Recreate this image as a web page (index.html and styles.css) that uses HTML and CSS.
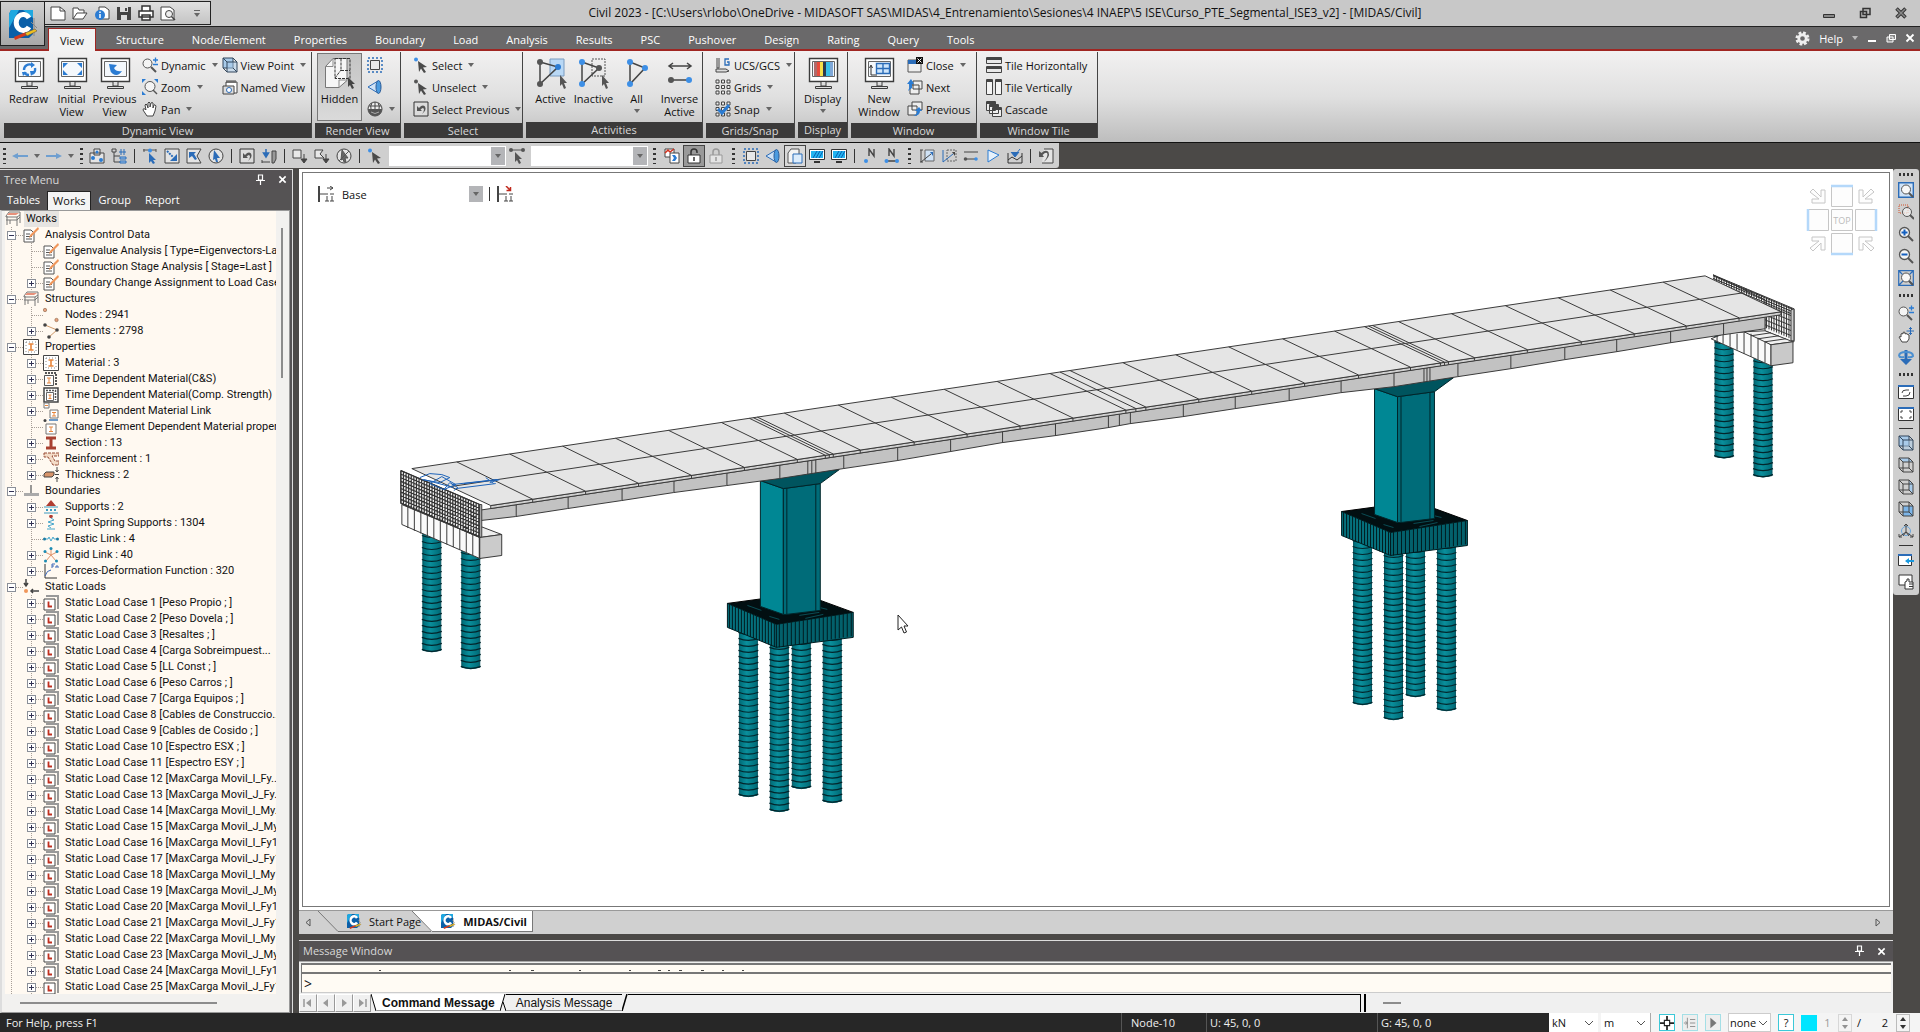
FILE: index.html
```html
<!DOCTYPE html>
<html lang="en">

<head>
    <meta charset="UTF-8">
    <meta name="viewport" content="width=device-width, initial-scale=1.0">
    <title>Civil 2023</title>
    <link rel="stylesheet" href="styles.css">
</head>

<body>
    <!-- icon sprite -->
    <svg class="sprite" aria-hidden="true">
        <symbol id="logo" viewBox="0 0 32 32">
            <path d="M4 2h22v24l-4 4H2V6z" fill="#0a5fa8" />
            <path d="M4 2h8L2 20V6zM16 2h10v8z" fill="#1fa8e0" />
            <path d="M22 10a7 8 0 1 0 0 9" fill="none" stroke="#fff" stroke-width="5" />
            <path d="M27 10v18M24 14l6 6" stroke="#888" fill="none" />
            <path d="M7 29l12-5 1 3-12 5z" fill="#d23a1e" />
            <path d="M18 25l10-4 2 2-10 5z" fill="#f0c020" stroke="#654" stroke-width=".6" />
        </symbol>
        <symbol id="new" viewBox="0 0 16 16"><path d="M1 2h9l5 4v9H1z" fill="#fff" stroke="#444" /><path d="M10 2v4h5" fill="none" stroke="#444" /></symbol>
        <symbol id="open" viewBox="0 0 16 16"><path d="M1 14V3h5l1 2h5v3M1 14l4-6h10l-4 6z" fill="#fff" stroke="#444" /></symbol>
        <symbol id="info" viewBox="0 0 16 16"><path d="M5 2h6l4 3v9H5z" fill="#fff" stroke="#444" /><circle cx="6" cy="10" r="5" fill="#2b7cd3" /><path d="M6 9v4M6 6.500v1.500" stroke="#fff" stroke-width="1.500" /></symbol>
        <symbol id="save" viewBox="0 0 16 16"><path d="M1 2h14v13H1z" fill="#444" /><path d="M4 2h8v5H4zM5 10h6v5H5z" fill="#ddd" /><path d="M9 3h2v3H9z" fill="#444" /></symbol>
        <symbol id="print" viewBox="0 0 16 16"><path d="M4 6V1h8v5M1 6h14v6H1zM4 10h8v5H4z" fill="#fff" stroke="#333" stroke-width="1.500" /></symbol>
        <symbol id="preview" viewBox="0 0 16 16"><path d="M1 2h9l4 3v10H1z" fill="#fff" stroke="#444" /><circle cx="9" cy="9" r="3.500" fill="#eee" stroke="#444" /><path d="M11.500 11.500L15 15" stroke="#444" stroke-width="1.500" /></symbol>
        <symbol id="caret" viewBox="0 0 6 4"><path d="M0 0h6L3 4z" fill="#666" /></symbol>
        <symbol id="chev" viewBox="0 0 10 6"><path d="M1 1l4 4 4-4" fill="none" stroke="#555" /></symbol>

        <!-- monitors -->
        <symbol id="monitor" viewBox="0 0 32 32"><path d="M2.500 1.500h28v23h-28z" fill="#fff" stroke="#3c3c3c" stroke-width="1.400" /><path d="M5.500 4.500h22v15h-22z" fill="#f4f8fc" stroke="#666" /><path d="M14 25v4h5v-4M8.500 29.500h16v2h-16z" fill="#ddd" stroke="#3c3c3c" /></symbol>
        <symbol id="redraw" viewBox="0 0 32 32"><use href="#monitor" /><path d="M11 13a5.500 5.500 0 0 1 8-5M22 11a5.500 5.500 0 0 1-3 6M16 18a5.500 5.500 0 0 1-5-3" fill="none" stroke="#2b7cd3" stroke-width="2.400" /><path d="M18 5l4 3-4 3zM22 14l-4 5-1-5zM9 15h5l-4 4z" fill="#2b7cd3" /></symbol>
        <symbol id="initial" viewBox="0 0 32 32"><use href="#monitor" /><path d="M7 6h5l-5 5zM26 6h-5l5 5zM7 18h5l-5-5zM26 18h-5l5-5z" fill="#2b7cd3" /></symbol>
        <symbol id="previous" viewBox="0 0 32 32"><use href="#monitor" /><path d="M10 7l8 1-3 3q2 4 8 3-4 6-9 3-3-2-3-5z" fill="#2b7cd3" /></symbol>
        <symbol id="display" viewBox="0 0 32 32"><use href="#monitor" /><path d="M7 5h3v14H7z" fill="#b06a6a" /><path d="M10 5h3v14h-3z" fill="#e84b3c" /><path d="M13 5h3v14h-3z" fill="#f5e04a" /><path d="M16 5h3v14h-3z" fill="#2c3a50" /><path d="M19 5h4v14h-4z" fill="#39c0e8" /><path d="M23 5h3v14h-3z" fill="#7fa8d8" /></symbol>
        <symbol id="newwin" viewBox="0 0 32 32"><use href="#monitor" /><path d="M13.500 6.500h13v10h-13zM20 6.500v10M13.500 11.500h13" fill="#cfe6fb" stroke="#2b6cb8" stroke-width="1.400" /><path d="M8 9v9h6M6.500 11L8 8l1.500 3" fill="none" stroke="#333" /></symbol>

        <!-- view -->
        <symbol id="mag" viewBox="0 0 16 16"><circle cx="6.500" cy="6.500" r="5" fill="#f4f4f4" stroke="#555" stroke-width="1.300" /><path d="M10 10l5 5" stroke="#555" stroke-width="2" /></symbol>
        <symbol id="magdyn" viewBox="0 0 16 16"><circle cx="5.500" cy="6.500" r="4.500" fill="#f4f4f4" stroke="#555" /><path d="M9 10l5 5" stroke="#555" stroke-width="2" /><path d="M11 3h5M13.500.5v5M11 7.500h5" stroke="#2b7cd3" stroke-width="1.300" /></symbol>
        <symbol id="magzoom" viewBox="0 0 16 16"><circle cx="8" cy="7.500" r="5" fill="#f4f4f4" stroke="#555" /><path d="M11 11l4 4" stroke="#555" stroke-width="1.500" /><path d="M0 0h4L0 4zM16 0h-4l4 4zM0 16h4l-4-4z" fill="#2b7cd3" /></symbol>
        <symbol id="magin" viewBox="0 0 16 16"><use href="#mag" /><path d="M3.500 6.500h6M6.500 3.500v6" stroke="#1560c0" stroke-width="2" /></symbol>
        <symbol id="magout" viewBox="0 0 16 16"><use href="#mag" /><path d="M3.500 6.500h6" stroke="#1560c0" stroke-width="2" /></symbol>
        <symbol id="magwin" viewBox="0 0 16 16"><path d="M1 1h9v8H1z" fill="none" stroke="#d0532a" stroke-dasharray="1 1" /><circle cx="9" cy="8" r="4.500" fill="#f4f4f4" fill-opacity=".7" stroke="#555" /><path d="M12 11l4 4" stroke="#555" stroke-width="2" /></symbol>
        <symbol id="magfit" viewBox="0 0 16 16"><path d="M.7.7h14.600v14.600H.7z" fill="#cfe2f6" stroke="#2b6cb8" stroke-width="1.400" /><circle cx="8" cy="7.500" r="4.500" fill="#f8f8f8" stroke="#555" /><path d="M11 11l4 4" stroke="#555" stroke-width="2" /></symbol>
        <symbol id="magall" viewBox="0 0 16 16"><path d="M.7.7h14.600v14.600H.7zM1 1l14 14M15 1L1 15" fill="none" stroke="#2b6cb8" stroke-width="1.200" /><circle cx="8" cy="7.500" r="4.500" fill="#f8f8f8" stroke="#555" /><path d="M11 11l4 4" stroke="#555" stroke-width="2" /></symbol>
        <symbol id="hand" viewBox="0 0 16 16"><path d="M5 15l-4-6q0-2 2-1l1 1-1-5q1-2 2 0l1 3V2q1-2 2 0v4l1-4q1-1 2 0v5l1-3q1-1 2 1l-1 5-2 5z" fill="#fff" stroke="#444" /></symbol>
        <symbol id="handmove" viewBox="0 0 16 16"><path d="M4 15l-3-5q0-1 2 0V7q1-1 2 0V5.500q1-1 2 0V7q1-1 2 0l2 1v4l-2 3z" fill="#fff" stroke="#444" /><path d="M12.500 0v8M8.500 4h8M11 1.500h3M11 6.500h3" stroke="#2b6cb8" /></symbol>
        <symbol id="rotate" viewBox="0 0 16 16"><path d="M6.500 1h3v9H14l-6 6-6-6h4.500z" fill="#2b6cb8" /><path d="M1 7q0-4 7-4t7 4q-2 2-5 1M6 8Q2 9 1 7" fill="none" stroke="#4b8fd0" stroke-width="2" /></symbol>
        <symbol id="cube" viewBox="0 0 16 16"><path d="M1 1h10v10H1z" fill="#a9cbea" stroke="#33475c" /><path d="M5 5h10v10H5zM1 1l4 4M11 1l4 4M1 11l4 4M11 11l4 4" fill="#a9cbea" fill-opacity=".5" stroke="#33475c" /></symbol>
        <symbol id="cubetop" viewBox="0 0 16 16"><path d="M1 1h10l4 4H5z" fill="#a9cbea" /><path d="M1 1h10v10H1zM5 5h10v10H5zM1 1l4 4M11 1l4 4M1 11l4 4M11 11l4 4" fill="none" stroke="#444" /></symbol>
        <symbol id="cuberight" viewBox="0 0 16 16"><path d="M11 1l4 4v10l-4-4z" fill="#a9cbea" /><path d="M1 1h10v10H1zM5 5h10v10H5zM1 1l4 4M11 1l4 4M1 11l4 4M11 11l4 4" fill="none" stroke="#444" /></symbol>
        <symbol id="cubefront" viewBox="0 0 16 16"><path d="M5 5h10v10H5z" fill="#7db5e8" /><path d="M1 1h10v10H1zM5 5h10v10H5zM1 1l4 4M11 1l4 4M1 11l4 4M11 11l4 4" fill="none" stroke="#444" /></symbol>
        <symbol id="axes" viewBox="0 0 16 16"><circle cx="8" cy="8" r="4.500" fill="none" stroke="#6aa6dc" /><path d="M8 9V1M6 3l2-2 2 2M8 9l-7 5M1 11v3h3M8 9l7 5M15 11v3h-3M5 13l3-4 3 4" fill="none" stroke="#444" /></symbol>
        <symbol id="camera" viewBox="0 0 16 16"><path d="M4 3h11v11H4z" fill="#fff" stroke="#444" /><path d="M5 1v3M7 1v3M9 1v3M11 1v3M13 1v3" stroke="#444" /><path d="M1 7h11v8H1z" fill="#ddd" stroke="#444" /><circle cx="7" cy="11" r="2.500" fill="#fff" stroke="#2b6cb8" /></symbol>
        <symbol id="hidden" viewBox="0 0 32 32"><path d="M1.500 9.500L9 1.500h14v22l-8 7H1.500z" fill="#f6f6f6" stroke="#777" /><path d="M1.500 9.500H9v-8M15 30v-7h8" fill="none" stroke="#888" /><path d="M11 1.500h15v20H11z" fill="none" stroke="#333" stroke-dasharray="3 1" /><path d="M17 1.500v12h9M11 21l6-8" fill="none" stroke="#333" stroke-dasharray="3 1" /><path d="M24 20l7 7-3 0 2 4-2 1-2-4-2 2z" fill="#444" /></symbol>
        <symbol id="dashbox" viewBox="0 0 16 16"><path d="M3.500 3.500h9v9h-9z" fill="#e8e8e8" stroke="#444" /><path d="M1 1h14v14H1z" fill="none" stroke="#2b6cb8" stroke-width="1.500" stroke-dasharray="2 2" /></symbol>
        <symbol id="cone" viewBox="0 0 16 16"><path d="M1 8l10-6v12z" fill="#cfe2f6" stroke="#2b6cb8" /><ellipse cx="11.500" cy="8" rx="2.500" ry="6.500" fill="#4b9be0" stroke="#2b5c98" /></symbol>
        <symbol id="globe" viewBox="0 0 16 16"><circle cx="8" cy="8" r="7" fill="#eee" stroke="#444" /><path d="M1 8h14a7 7 0 0 1-14 0z" fill="#555" /><path d="M8 1v7M2 5h12M5 2q-2 3-1 6M11 2q2 3 1 6" fill="none" stroke="#444" /><path d="M4 11q4 3 8 0" stroke="#aaa" fill="none" /></symbol>
        <symbol id="arrow" viewBox="0 0 16 16"><path d="M5 4l9 6-4 .5 3 4.500-2 1-3-4.500L6 15z" fill="#4a4a4a" /></symbol>
        <symbol id="select" viewBox="0 0 16 16"><circle cx="3" cy="2.500" r="2" fill="#3d8fe6" /><use href="#arrow" /></symbol>
        <symbol id="unselect" viewBox="0 0 16 16"><circle cx="3" cy="2.500" r="2" fill="#555" /><use href="#arrow" /></symbol>
        <symbol id="selprev" viewBox="0 0 16 16"><path d="M1 1h14v14H1z" fill="#dcdcdc" stroke="#333" /><path d="M4 5v5h5L7.500 8.500q3-3 3.500 0 0 2-2 4.500 5-4 3-7.500-2.500-2.500-6 1.500z" fill="#555" /></symbol>
        <symbol id="active" viewBox="0 0 32 32"><path d="M15 2h14v17H15z" fill="#b9d8f5" stroke="#7a9cc0" /><path d="M5 5l18 5L5 27z" fill="none" stroke="#444" stroke-width="1.500" /><circle cx="5" cy="5" r="3" fill="#555" /><circle cx="5" cy="27" r="3" fill="#555" /><circle cx="23" cy="10" r="3" fill="#2b7cd3" /><path d="M25 18l7 8-3 0 2 5-2 1-2-5-2 2z" fill="#555" /></symbol>
        <symbol id="inactive" viewBox="0 0 32 32"><path d="M14 2h13v17H14z" fill="none" stroke="#555" stroke-dasharray="2 1" /><path d="M4 5l17 6L4 27z" fill="none" stroke="#444" stroke-width="1.500" /><circle cx="4" cy="5" r="3" fill="#3d8fe6" /><circle cx="4" cy="27" r="3" fill="#3d8fe6" /><circle cx="21" cy="11" r="3" fill="#555" /><path d="M24 18l7 8-3 0 2 5-2 1-2-5-2 2z" fill="#555" /></symbol>
        <symbol id="allact" viewBox="0 0 32 32"><path d="M9 5l15 6L9 27z" fill="none" stroke="#444" stroke-width="1.500" /><circle cx="9" cy="5" r="3" fill="#3d8fe6" /><circle cx="9" cy="27" r="3" fill="#3d8fe6" /><circle cx="24" cy="11" r="3" fill="#3d8fe6" /></symbol>
        <symbol id="inverse" viewBox="0 0 32 32"><path d="M5 9h22M9 6L5 9l4 3M23 6l4 3-4 3M8 23h17" fill="none" stroke="#444" stroke-width="1.500" /><circle cx="7" cy="23" r="3" fill="#555" /><circle cx="25" cy="23" r="3" fill="#3d8fe6" /></symbol>
        <symbol id="ucs" viewBox="0 0 16 16"><path d="M2 1v10M4 1v10M2 11h2M1 12h10l3 2-3 1H1z" fill="#ddd" stroke="#444" /><path d="M14 2h-4v6h4V5h-2" fill="none" stroke="#2b6cb8" stroke-width="1.300" /></symbol>
        <symbol id="grids" viewBox="0 0 16 16"><path d="M1 1h3v3H1zM6.500 1h3v3h-3zM12 1h3v3h-3zM1 6.500h3v3H1zM6.500 6.500h3v3h-3zM12 6.500h3v3h-3zM1 12h3v3H1zM6.500 12h3v3h-3zM12 12h3v3h-3z" fill="#eee" stroke="#444" /></symbol>
        <symbol id="snap" viewBox="0 0 16 16"><use href="#grids" /><path d="M3 8l4 4 7-8" fill="none" stroke="#2b7cd3" stroke-width="3" /></symbol>
        <symbol id="winclose" viewBox="0 0 16 16"><path d="M1 3h13v12H1z" fill="#eee" stroke="#555" /><path d="M1 3h9v4H1z" fill="#2b6cb8" /><path d="M9 0h7v7H9z" fill="#111" /><path d="M10.500 1.500l4 4M14.500 1.500l-4 4" stroke="#fff" /></symbol>
        <symbol id="winnext" viewBox="0 0 16 16"><path d="M6 2h9v8H6zM3 6h9v9H3z" fill="#eee" stroke="#444" /><path d="M0 5l4-5 3 5H5v4q-3 2-4 3 2-3 1-7z" fill="#2b7cd3" /></symbol>
        <symbol id="winprev" viewBox="0 0 16 16"><path d="M5 1h10v8H5zM1 5h9v9H1z" fill="#eee" stroke="#444" /><path d="M6 15q4-1 4-5H8l4-4 3 4h-2q0 5-7 5z" fill="#2b7cd3" /></symbol>
        <symbol id="tileh" viewBox="0 0 16 16"><path d="M.5.5h15v6H.5zM.5 9.500h15v6H.5z" fill="#e8e8e8" stroke="#444" /><path d="M1 1h14v2H1zM1 10h14v2H1z" fill="#444" /></symbol>
        <symbol id="tilev" viewBox="0 0 16 16"><path d="M.5.5h6v15h-6zM9.500.5h6v15h-6z" fill="#f4f4f4" stroke="#444" /><path d="M1 1h5v2H1zM10 1h5v2h-5z" fill="#444" /></symbol>
        <symbol id="cascade" viewBox="0 0 16 16"><path d="M.5.5h9v9h-9zM3.500 3.500h9v9h-9zM6.500 6.500h9v9h-9z" fill="#eee" stroke="#444" /><path d="M1 1h8v2H1zM4 4h8v2H4zM7 7h8v2H7z" fill="#444" /></symbol>

        <!-- toolbar -->
        <symbol id="back" viewBox="0 0 16 16"><path d="M16 7H6V5L0 8l6 3V9h10z" fill="#6f9fd0" /></symbol>
        <symbol id="fwd" viewBox="0 0 16 16"><path d="M0 7h10V5l6 3-6 3V9H0z" fill="#6f9fd0" /></symbol>
        <symbol id="boxes" viewBox="0 0 16 16"><path d="M1 5h14v10H1zM5 1h6v6H5z" fill="#e4e4e4" stroke="#444" /><circle cx="8" cy="4" r="1.500" fill="#2b7cd3" /><circle cx="4" cy="10" r="2" fill="#2b7cd3" /><circle cx="12" cy="12" r="2" fill="#2b7cd3" /></symbol>
        <symbol id="treeic" viewBox="0 0 16 16"><path d="M1 1h4v3H1zM3 4v10h6M3 8h6" fill="none" stroke="#444" /><path d="M10 1v6M13 1v6M8 4h7M9 9h6v2H9zM9 13h6v2H9z" stroke="#2b6cb8" fill="#9cc4ec" /></symbol>
        <symbol id="ptsel" viewBox="0 0 16 16"><path d="M1 2h13M2 4v-3M14 4v-3" stroke="#555" /><circle cx="8" cy="2.500" r="2" fill="#3d8fe6" /><path d="M7 5l7 7-3 0 2 3-2 1-2-3-2 2z" fill="#2b6cb8" /></symbol>
        <symbol id="winsel" viewBox="0 0 16 16"><path d="M1 1h14v14H1z" fill="#e4e4e4" stroke="#444" /><path d="M3 3l6 6" stroke="#2b6cb8" stroke-width="2" stroke-dasharray="2 1" /><path d="M13 6v7H6z" fill="#2b6cb8" /></symbol>
        <symbol id="polysel" viewBox="0 0 16 16"><path d="M1 1h14l-4 7 4 7H1z" fill="#e4e4e4" stroke="#444" /><path d="M3 4h7l-2 2 3 5-2 1-3-4-3 2z" fill="#2b6cb8" /></symbol>
        <symbol id="circsel" viewBox="0 0 16 16"><circle cx="8" cy="8" r="7" fill="#e4e4e4" stroke="#444" /><path d="M6 2l6 8H9l1 4-2 0-1-3-2 1z" fill="#2b6cb8" /></symbol>
        <symbol id="planesel" viewBox="0 0 16 16"><path d="M11 3h4v8l-2 4h-2z" fill="#999" stroke="#444" /><path d="M5 1v5M2.500 5h5L5 9z" fill="#2b6cb8" stroke="#2b6cb8" stroke-width="1.500" /><path d="M1 14h8M1 12v3" stroke="#444" /></symbol>
        <symbol id="sqdown" viewBox="0 0 16 16"><path d="M1 2h8v8H1z" fill="#e8e8e8" stroke="#444" /><path d="M12 6v7M9 11l3 4 3-4z" fill="#444" stroke="#444" /></symbol>
        <symbol id="polydown" viewBox="0 0 16 16"><path d="M1 2h8L6 6l4 4H1z" fill="#e8e8e8" stroke="#444" /><path d="M12 6v7M9 11l3 4 3-4z" fill="#444" stroke="#444" /></symbol>
        <symbol id="circno" viewBox="0 0 16 16"><circle cx="8" cy="8" r="7" fill="#e4e4e4" stroke="#444" /><path d="M6 2l6 8H9l1 4-2 0-1-3-2 1zM3 13L13 3" fill="#666" stroke="#555" /></symbol>
        <symbol id="linesel" viewBox="0 0 16 16"><path d="M1 2h14" stroke="#555" /><circle cx="2" cy="2" r="2" fill="#555" /><circle cx="14" cy="2" r="2" fill="#555" /><path d="M6 4l7 7-3 0 2 4-2 1-2-4-2 2z" fill="#555" /></symbol>
        <symbol id="graphs" viewBox="0 0 16 16"><path d="M1 1h9v8H1z" fill="#fff" stroke="#444" /><path d="M1 5l3-3 2 2 4-3" stroke="#d2321e" fill="none" stroke-width="1.500" /><path d="M6 5h9v10H6z" fill="#fff" stroke="#444" /><path d="M8 7h3l2 3-2 3H8l2-3z" fill="#2b7cd3" /></symbol>
        <symbol id="lock" viewBox="0 0 16 16"><path d="M2 7h12v8H2z" fill="#fff" stroke="#333" /><path d="M5 7V4q0-3 3-3t3 3v1M8 9v4" fill="none" stroke="#333" stroke-width="1.500" /></symbol>
        <symbol id="lockoff" viewBox="0 0 16 16"><path d="M2 7h12v8H2z" fill="#e4e4e4" stroke="#999" /><path d="M5 7V4q0-3 3-3t3 3v3M8 9v4" fill="none" stroke="#999" stroke-width="1.500" /></symbol>
        <symbol id="hidesm" viewBox="0 0 16 16"><path d="M1 5l3-4h8v10l-3 4H1z" fill="#f4f4f4" stroke="#555" /><path d="M6 6h9v9H6z" fill="#dcecfb" stroke="#2b6cb8" /></symbol>
        <symbol id="scr" viewBox="0 0 16 16"><path d="M.5 1.500h15v10H.5z" fill="#fff" stroke="#333" /><path d="M2 3h12v7H2z" fill="#22b4f0" /><path d="M4 10l4-7M7 10l4-7M10 10l4-7" stroke="#0a5fb0" /><path d="M5 14h6" stroke="#333" stroke-width="2" /></symbol>
        <symbol id="nodeno" viewBox="0 0 16 16"><path d="M7 8V1l5 7V1" fill="none" stroke="#444" stroke-width="1.400" /><circle cx="4" cy="13" r="2" fill="#3d8fe6" /></symbol>
        <symbol id="elemno" viewBox="0 0 16 16"><path d="M5 8V1l5 7V1M2 13h12" fill="none" stroke="#444" stroke-width="1.400" /><circle cx="2.500" cy="13" r="2" fill="#3d8fe6" /><circle cx="13" cy="13" r="2" fill="#3d8fe6" /></symbol>
        <symbol id="act1" viewBox="0 0 16 16"><path d="M6 2h9v11H6z" fill="#cfe2f6" stroke="#666" /><path d="M2 2v12l10-8M1 2h3M1 14h3" fill="none" stroke="#444" /><path d="M11 4h3v4z" fill="#2b6cb8" /></symbol>
        <symbol id="act2" viewBox="0 0 16 16"><path d="M6 2h9v11H6z" fill="none" stroke="#666" stroke-dasharray="2 1" /><path d="M2 2v12l10-8" fill="none" stroke="#2b6cb8" /><path d="M11 4h3v4z" fill="#444" /></symbol>
        <symbol id="act3" viewBox="0 0 16 16"><path d="M1 4h14M3 11h11" stroke="#444" /><circle cx="2.500" cy="11" r="1.800" fill="#555" /><circle cx="13" cy="11" r="1.800" fill="#3d8fe6" /></symbol>
        <symbol id="act4" viewBox="0 0 16 16"><path d="M3 2l11 5-11 7z" fill="#e6f1fb" stroke="#2b7cd3" /></symbol>
        <symbol id="act5" viewBox="0 0 16 16"><path d="M1 5v10h14V5M1 12l4-3 5 3 5-4" fill="none" stroke="#333" /><path d="M4 4l4 5 4-5M13 1L9 6" fill="#2b6cb8" stroke="#2b6cb8" /></symbol>
        <symbol id="act6" viewBox="0 0 16 16"><path d="M6 1h9v14H4" fill="#e4e4e4" stroke="#444" /><path d="M1 3v6h5L4.500 7q4-4 5-1 0 4-4 8 7-5 5-10-3-3-7 1z" fill="#555" /></symbol>
        <symbol id="stage" viewBox="0 0 16 16"><path d="M1 0v16" stroke="#444" stroke-width="2" /><path d="M1 8h9M12 8h4M9 2h6M12 0l3 2-3 2M9 15v-5M14 15v-5M7 15h4M12 15h4" fill="none" stroke="#444" /></symbol>
        <symbol id="stagered" viewBox="0 0 16 16"><path d="M1 0v16" stroke="#444" stroke-width="2" /><path d="M1 8h9M12 8h4M9 15v-5M14 15v-5M7 15h4M12 15h4" fill="none" stroke="#444" /><path d="M9 0l4 4M13.500 1v3.500h-4" stroke="#c0281c" fill="none" stroke-width="1.500" /></symbol>
        <symbol id="winrot" viewBox="0 0 16 16"><path d="M.5 1.500h15v13H.5z" fill="#fff" stroke="#333" /><path d="M0 1h16v2H0z" fill="#2b6cb8" /><path d="M4 9q0-3 4-3h3M12 8q0 4-4 4H5" fill="none" stroke="#444" /></symbol>
        <symbol id="winfit" viewBox="0 0 16 16"><path d="M.5 1.500h15v13H.5z" fill="#fff" stroke="#333" /><path d="M0 1h16v2H0z" fill="#2b6cb8" /><path d="M3 7V5h2M13 7V5h-2M3 10v2h2M13 10v2h-2" fill="none" stroke="#444" /></symbol>
        <symbol id="winarrow" viewBox="0 0 16 16"><path d="M.5 2.500h13v11H.5z" fill="#fff" stroke="#333" /><path d="M0 2h14v2H0z" fill="#2b6cb8" /><path d="M7 9l4-3v2h5v2h-5v2z" fill="#1a9ae0" /></symbol>
        <symbol id="winhand" viewBox="0 0 16 16"><path d="M1 1h13v10H1z" fill="#fff" stroke="#333" /><path d="M7 8l2-1V5h2v3h4v7H7zM11 10h4M11 12.500h4" fill="#fff" stroke="#333" /></symbol>
        <symbol id="gear" viewBox="0 0 16 16"><circle cx="8" cy="8" r="5.500" fill="none" stroke="#eee" stroke-width="4" stroke-dasharray="2.600 1.700" /><circle cx="8" cy="8" r="4" fill="none" stroke="#eee" stroke-width="3" /></symbol>
        <symbol id="pin" viewBox="0 0 10 12"><path d="M2.500 1h4v5h-4zM0 6.500h9M4.500 7v4" fill="none" stroke="#fff" stroke-width="1.200" /></symbol>
        <symbol id="x" viewBox="0 0 10 10"><path d="M1.500 1.500l7 7M8.500 1.500l-7 7" stroke="#fff" stroke-width="1.800" /></symbol>

        <!-- tree -->
        <symbol id="t-root" viewBox="0 0 16 16"><path d="M1 5l3-4h11v3l-3 2H1zM1 9h11l3-3M2 5v9M12 6v9M5 9v4M15 4v8" fill="none" stroke="#777" /><path d="M2 4l2-2h10l-3 2z" fill="#e8907a" /></symbol>
        <symbol id="t-edit" viewBox="0 0 16 16"><path d="M1 3h7l3 3v9H1z" fill="#fff" stroke="#555" /><path d="M3 7h4M3 9.500h6M3 12h6" stroke="#555" /><path d="M15 0l1 2-8 8-2 1 1-3z" fill="#f0965a" /></symbol>
        <symbol id="t-nodes" viewBox="0 0 16 16"><circle cx="2" cy="3" r="1.700" fill="#e8a080" stroke="#864" stroke-width=".6" /><circle cx="13.500" cy="13" r="1.700" fill="#e8a080" stroke="#864" stroke-width=".6" /></symbol>
        <symbol id="t-elems" viewBox="0 0 16 16"><path d="M2 2l12 5-8 7" fill="none" stroke="#d09a6a" /><circle cx="2" cy="2" r="1.800" fill="#444" /><circle cx="14" cy="7" r="1.800" fill="#444" /><circle cx="6" cy="14" r="1.800" fill="#444" /></symbol>
        <symbol id="t-mat" viewBox="0 0 16 16"><path d="M.5.5h15v15H.5z" fill="#fff" stroke="#444" /><path d="M3 3h10v10H3z" fill="none" stroke="#888" stroke-dasharray="1 2" /><path d="M5.500 5h5M5.500 11h5M8 5v6" stroke="#e8863c" stroke-width="1.600" /></symbol>
        <symbol id="t-time" viewBox="0 0 16 16"><path d="M2 2h11v12" fill="none" stroke="#555" stroke-width="2" stroke-dasharray="2 1" /><path d="M1.500 4.500h9v10h-9z" fill="#fff" stroke="#555" /><path d="M4 7h4M4 12h4M6 7v5" stroke="#e8863c" /></symbol>
        <symbol id="t-comp" viewBox="0 0 16 16"><path d="M1 1h14v14H1z" fill="#fff" stroke="#444" stroke-width="1.500" /><path d="M3 3.500h9.500V13" fill="none" stroke="#555" stroke-width="1.500" stroke-dasharray="2 1" /><path d="M3.500 5.500h7v8h-7z" fill="#fff" stroke="#666" /><path d="M5.500 8h3M5.500 11.500h3M7 8v3" stroke="#e8863c" /></symbol>
        <symbol id="t-link" viewBox="0 0 16 16"><path d="M1 0h5v5H1zM7 7h8v8H7z" fill="#fff" stroke="#777" /><path d="M9 9.500h4M9 13h4M11 9v4M2 2.500h3" stroke="#e8863c" /></symbol>
        <symbol id="t-chg" viewBox="0 0 16 16"><path d="M3 5h10v10H3z" fill="#fff" stroke="#777" /><path d="M6 8h4M6 12.500h4M8 8v4" stroke="#e8863c" /><path d="M6 1h9" stroke="#3c78b8" stroke-width="1.500" /><circle cx="2" cy="1.500" r="1.500" fill="#444" /></symbol>
        <symbol id="t-sec" viewBox="0 0 16 16"><path d="M3 3h10M3 13h10M8 3v10" stroke="#a84030" stroke-width="3" /></symbol>
        <symbol id="t-rein" viewBox="0 0 16 16"><path d="M1 2h15v3H9l3 5h4v4h-6L5 6H1z" fill="#f4dcc8" stroke="#964a34" stroke-dasharray="3 1" /></symbol>
        <symbol id="t-thick" viewBox="0 0 16 16"><path d="M1 7l2-2h8v3l-2 2H1z" fill="#d8946a" stroke="#444" /><path d="M14 0v5M12.500 3L14 5l1.500-2M14 15v-5M12.500 12l1.500-2 1.500 2M12 7.500h4" fill="none" stroke="#444" /></symbol>
        <symbol id="t-bound" viewBox="0 0 16 16"><path d="M8 2v8" stroke="#777" stroke-width="1.500" /><path d="M1 10h15v3H1z" fill="#aaa" /></symbol>
        <symbol id="t-supp" viewBox="0 0 16 16"><path d="M8 1l5 6H3z" fill="#b03c30" /><path d="M1 8h14M1 14h14" stroke="#3d9ac0" /><path d="M3 11h2M7 11h2M11 11h2" stroke="#3d9ac0" stroke-width="2" /></symbol>
        <symbol id="t-spring" viewBox="0 0 16 16"><circle cx="8" cy="1.500" r="1.800" fill="#b03c30" /><path d="M8 3l3 2-6 2 6 2-6 2 3 2M4 14h8" fill="none" stroke="#4aa8cc" /></symbol>
        <symbol id="t-elastic" viewBox="0 0 16 16"><path d="M1 8h4l1-2 2 4 2-4 1 2h4" fill="none" stroke="#4aa8cc" /><circle cx="1.500" cy="8" r="1.500" fill="#1c7ca4" /><circle cx="14.500" cy="8" r="1.500" fill="#1c7ca4" /></symbol>
        <symbol id="t-rigid" viewBox="0 0 16 16"><path d="M8 8V2M8 8L2 5M8 8l6-3M8 8l-5 6M8 8l5 6" stroke="#e0946a" /><g fill="#1c8cb4"><circle cx="8" cy="1.500" r="1.500" /><circle cx="2" cy="4.500" r="1.500" /><circle cx="14" cy="4.500" r="1.500" /><circle cx="2.500" cy="14" r="1.500" /><circle cx="13.500" cy="14" r="1.500" /></g></symbol>
        <symbol id="t-force" viewBox="0 0 16 16"><path d="M2 1v14h12" fill="none" stroke="#333" /><path d="M2 13q2-6 6-6M9 5V1h3M9 3h2M13 5V3h2v2" fill="none" stroke="#3c68b8" /></symbol>
        <symbol id="t-loads" viewBox="0 0 16 16"><path d="M3 0v6M1 4l2 3 2-3M16 12H8M10 10l-2 2 2 2" fill="none" stroke="#444" stroke-width="1.500" /><circle cx="3" cy="12" r="2" fill="#f0965a" /></symbol>
        <symbol id="t-case" viewBox="0 0 16 16"><path d="M3 1h12v13" fill="none" stroke="#999" stroke-width="2" /><path d="M1 4h11v11H1z" fill="#fff" stroke="#444" /><path d="M5.500 6.500v5h3.500" fill="none" stroke="#c03020" stroke-width="1.800" /></symbol>
    </svg>

    <header class="titlebar">
        <button class="app-button" aria-label="Application menu"><svg><use href="#logo" /></svg></button>
        <div class="quick">
            <button aria-label="New"><svg class="ic"><use href="#new" /></svg></button>
            <button aria-label="Open"><svg class="ic"><use href="#open" /></svg></button>
            <button aria-label="Info"><svg class="ic"><use href="#info" /></svg></button>
            <button aria-label="Save"><svg class="ic"><use href="#save" /></svg></button>
            <button aria-label="Print"><svg class="ic"><use href="#print" /></svg></button>
            <button aria-label="Preview"><svg class="ic"><use href="#preview" /></svg></button>
            <button class="quick-more" aria-label="Customize"><svg class="caret"><use href="#caret" /></svg></button>
        </div>
        <h1>Civil 2023 - [C:\Users\rlobo\OneDrive - MIDASOFT SAS\MIDAS\4_Entrenamiento\Sesiones\4 INAEP\5 ISE\Curso_PTE_Segmental_ISE3_v2] - [MIDAS/Civil]</h1>
        <div class="window-buttons">
            <button aria-label="Minimize"><svg viewBox="0 0 12 12"><path d="M.5 7.500h11v3H.5z" fill="#888" stroke="#333" /></svg></button>
            <button aria-label="Restore"><svg viewBox="0 0 12 12"><path d="M4 1.500h7v6H4zM1.500 4.500h6v6h-6z" fill="#bbb" stroke="#333" stroke-width="1.500" /></svg></button>
            <button aria-label="Close"><svg viewBox="0 0 12 12"><path d="M1.500 1.500l9 9M10.500 1.500l-9 9" stroke="#333" stroke-width="3.500" /><path d="M2 2l8 8M10 2l-8 8" stroke="#888" stroke-width="1.500" /></svg></button>
        </div>
    </header>

    <nav class="tabs">
        <a class="tab active" href="#">View</a>
        <a class="tab" href="#">Structure</a>
        <a class="tab" href="#">Node/Element</a>
        <a class="tab" href="#">Properties</a>
        <a class="tab" href="#">Boundary</a>
        <a class="tab" href="#">Load</a>
        <a class="tab" href="#">Analysis</a>
        <a class="tab" href="#">Results</a>
        <a class="tab" href="#">PSC</a>
        <a class="tab" href="#">Pushover</a>
        <a class="tab" href="#">Design</a>
        <a class="tab" href="#">Rating</a>
        <a class="tab" href="#">Query</a>
        <a class="tab" href="#">Tools</a>
        <div class="help">
            <svg class="ic"><use href="#gear" /></svg>
            <a href="#">Help</a>
            <svg class="help-caret" viewBox="0 0 6 4"><path d="M0 0h6L3 4z" fill="#bbb" /></svg>
            <button aria-label="Minimize document"><svg viewBox="0 0 10 10"><path d="M1 8h8" stroke="#fff" stroke-width="2" /></svg></button>
            <button aria-label="Restore document"><svg viewBox="0 0 10 10"><path d="M3.500 1.500h6v5h-6zM1 4h6v5H1z" fill="#888" stroke="#fff" /></svg></button>
            <button aria-label="Close document"><svg><use href="#x" /></svg></button>
        </div>
    </nav>

    <section class="ribbon">
        <div class="group g-dynamic">
            <div class="group-body">
                <button class="big"><svg><use href="#redraw" /></svg>Redraw</button>
                <button class="big"><svg><use href="#initial" /></svg>Initial<br>View</button>
                <button class="big"><svg><use href="#previous" /></svg>Previous<br>View</button>
                <div class="col">
                    <button><svg class="ic"><use href="#magdyn" /></svg>Dynamic<svg class="caret"><use href="#caret" /></svg></button>
                    <button><svg class="ic"><use href="#magzoom" /></svg>Zoom<svg class="caret"><use href="#caret" /></svg></button>
                    <button><svg class="ic"><use href="#hand" /></svg>Pan<svg class="caret"><use href="#caret" /></svg></button>
                </div>
                <div class="col">
                    <button><svg class="ic"><use href="#cube" /></svg>View Point<svg class="caret"><use href="#caret" /></svg></button>
                    <button><svg class="ic"><use href="#camera" /></svg>Named View</button>
                </div>
            </div>
            <h2>Dynamic View</h2>
        </div>
        <div class="group g-render">
            <div class="group-body">
                <button class="big pressed"><svg><use href="#hidden" /></svg>Hidden</button>
                <div class="col">
                    <button aria-label="Shrink"><svg class="ic"><use href="#dashbox" /></svg></button>
                    <button aria-label="Perspective"><svg class="ic"><use href="#cone" /></svg></button>
                    <button aria-label="Render"><svg class="ic"><use href="#globe" /></svg><svg class="caret"><use href="#caret" /></svg></button>
                </div>
            </div>
            <h2>Render View</h2>
        </div>
        <div class="group g-select">
            <div class="group-body">
                <div class="col">
                    <button><svg class="ic"><use href="#select" /></svg>Select<svg class="caret"><use href="#caret" /></svg></button>
                    <button><svg class="ic"><use href="#unselect" /></svg>Unselect<svg class="caret"><use href="#caret" /></svg></button>
                    <button><svg class="ic"><use href="#selprev" /></svg>Select Previous<svg class="caret"><use href="#caret" /></svg></button>
                </div>
            </div>
            <h2>Select</h2>
        </div>
        <div class="group g-activities">
            <div class="group-body">
                <button class="big"><svg><use href="#active" /></svg>Active</button>
                <button class="big"><svg><use href="#inactive" /></svg>Inactive</button>
                <button class="big"><svg><use href="#allact" /></svg>All<svg class="caret"><use href="#caret" /></svg></button>
                <button class="big"><svg><use href="#inverse" /></svg>Inverse<br>Active</button>
            </div>
            <h2>Activities</h2>
        </div>
        <div class="group g-grids">
            <div class="group-body">
                <div class="col">
                    <button><svg class="ic"><use href="#ucs" /></svg>UCS/GCS<svg class="caret"><use href="#caret" /></svg></button>
                    <button><svg class="ic"><use href="#grids" /></svg>Grids<svg class="caret"><use href="#caret" /></svg></button>
                    <button><svg class="ic"><use href="#snap" /></svg>Snap<svg class="caret"><use href="#caret" /></svg></button>
                </div>
            </div>
            <h2>Grids/Snap</h2>
        </div>
        <div class="group g-display">
            <div class="group-body">
                <button class="big"><svg><use href="#display" /></svg>Display<svg class="caret"><use href="#caret" /></svg></button>
            </div>
            <h2>Display</h2>
        </div>
        <div class="group g-window">
            <div class="group-body">
                <button class="big wide"><svg><use href="#newwin" /></svg>New<br>Window</button>
                <div class="col tight">
                    <button><svg class="ic"><use href="#winclose" /></svg>Close<svg class="caret"><use href="#caret" /></svg></button>
                    <button><svg class="ic"><use href="#winnext" /></svg>Next</button>
                    <button><svg class="ic"><use href="#winprev" /></svg>Previous</button>
                </div>
            </div>
            <h2>Window</h2>
        </div>
        <div class="group g-tile">
            <div class="group-body">
                <div class="col tight">
                    <button><svg class="ic"><use href="#tileh" /></svg>Tile Horizontally</button>
                    <button><svg class="ic"><use href="#tilev" /></svg>Tile Vertically</button>
                    <button><svg class="ic"><use href="#cascade" /></svg>Cascade</button>
                </div>
            </div>
            <h2>Window Tile</h2>
        </div>
    </section>

    <div class="toolbar-row">
        <div class="toolbar">
            <i class="grip"></i>
            <button aria-label="Undo"><svg class="ic"><use href="#back" /></svg></button>
            <svg class="caret"><use href="#caret" /></svg>
            <button aria-label="Redo"><svg class="ic"><use href="#fwd" /></svg></button>
            <svg class="caret"><use href="#caret" /></svg>
            <i class="grip"></i>
            <button aria-label="Works tree"><svg class="ic"><use href="#boxes" /></svg></button>
            <button aria-label="Group tree"><svg class="ic"><use href="#treeic" /></svg></button>
            <i class="sep"></i>
            <button aria-label="Select single"><svg class="ic"><use href="#ptsel" /></svg></button>
            <button aria-label="Select window"><svg class="ic"><use href="#winsel" /></svg></button>
            <button aria-label="Select polygon"><svg class="ic"><use href="#polysel" /></svg></button>
            <button aria-label="Select circle"><svg class="ic"><use href="#circsel" /></svg></button>
            <i class="sep"></i>
            <button aria-label="Select previous"><svg class="ic"><use href="#selprev" /></svg></button>
            <button aria-label="Select plane"><svg class="ic"><use href="#planesel" /></svg></button>
            <i class="sep"></i>
            <button aria-label="Unselect window"><svg class="ic"><use href="#sqdown" /></svg></button>
            <button aria-label="Unselect polygon"><svg class="ic"><use href="#polydown" /></svg></button>
            <button aria-label="Unselect circle"><svg class="ic"><use href="#circno" /></svg></button>
            <i class="sep"></i>
            <button aria-label="Select nodes"><svg class="ic"><use href="#select" /></svg></button>
            <span class="combo"><select aria-label="Node list"><option></option></select><span><svg class="caret"><use href="#caret" /></svg></span></span>
            <button aria-label="Select elements"><svg class="ic"><use href="#linesel" /></svg></button>
            <span class="combo"><select aria-label="Element list"><option></option></select><span><svg class="caret"><use href="#caret" /></svg></span></span>
            <i class="grip wide-grip"></i>
            <button aria-label="Results"><svg class="ic"><use href="#graphs" /></svg></button>
            <button class="on" aria-label="Unlock"><svg class="ic"><use href="#lock" /></svg></button>
            <button aria-label="Lock"><svg class="ic"><use href="#lockoff" /></svg></button>
            <i class="grip wide-grip"></i>
            <button aria-label="Shrink"><svg class="ic"><use href="#dashbox" /></svg></button>
            <button aria-label="Perspective"><svg class="ic"><use href="#cone" /></svg></button>
            <button class="on light" aria-label="Hidden"><svg class="ic"><use href="#hidesm" /></svg></button>
            <button aria-label="Display"><svg class="ic"><use href="#scr" /></svg></button>
            <button aria-label="Display option"><svg class="ic"><use href="#scr" /></svg></button>
            <i class="sep"></i>
            <button aria-label="Node number"><svg class="ic"><use href="#nodeno" /></svg></button>
            <button aria-label="Element number"><svg class="ic"><use href="#elemno" /></svg></button>
            <i class="grip wide-grip"></i>
            <button aria-label="Active"><svg class="ic"><use href="#act1" /></svg></button>
            <button aria-label="Inactive"><svg class="ic"><use href="#act2" /></svg></button>
            <button aria-label="Inverse"><svg class="ic"><use href="#act3" /></svg></button>
            <button aria-label="All"><svg class="ic"><use href="#act4" /></svg></button>
            <button aria-label="Active identity"><svg class="ic"><use href="#act5" /></svg></button>
            <i class="sep"></i>
            <button aria-label="Active previous"><svg class="ic"><use href="#act6" /></svg></button>
        </div>
    </div>

    <main>
        <aside class="tree-panel">
            <div class="panel-title"><span>Tree Menu</span><svg class="pin"><use href="#pin" /></svg><svg class="x"><use href="#x" /></svg></div>
            <nav class="tree-tabs">
                <a href="#">Tables</a><a class="active" href="#">Works</a><a href="#">Group</a><a href="#">Report</a>
            </nav>
            <div class="tree-box">
                <div class="tree-scroll">
                    <ul class="tree" id="tree"></ul>
                    <div class="vbar"><i></i></div>
                </div>
                <div class="hbar"><i></i></div>
            </div>
        </aside>

        <section class="center">
            <div class="view">
                <svg class="model" id="model" viewBox="302 172 1588 736" preserveAspectRatio="xMinYMin meet" role="img" aria-label="Bridge model"></svg>
                <div class="stage-bar">
                    <svg class="ic"><use href="#stage" /></svg>
                    <select aria-label="Stage"><option>Base</option></select>
                    <span class="stage-arrow"><svg class="caret"><use href="#caret" /></svg></span>
                    <i class="sep"></i>
                    <svg class="ic"><use href="#stagered" /></svg>
                </div>
                <svg class="view-cube" viewBox="0 0 72 72">
                    <g fill="#fdfdfd" stroke="#c6c6c6">
                        <path d="M25.500 1.500h21v21h-21zM25.500 25.500h21v21h-21zM25.500 49.500h21v21h-21zM1.500 25.500h21v21h-21zM49.500 25.500h21v21h-21z" />
                        <path d="M4 8l3-3 8 8V6h4v13H6v-4h7z" />
                        <path d="M68 8l-3-3-8 8V6h-4v13h13v-4h-7zM4 64l3 3 8-8v7h4V53H6v4h7zM68 64l-3 3-8-8v7h-4V53h13v4h-7z" />
                    </g>
                    <path d="M25 2h22M25 70h22M2 25v22M70 25v22" stroke="#b4d8fa" stroke-width="2.500" />
                    <text x="36" y="40">TOP</text>
                </svg>
                <svg class="pointer" viewBox="0 0 12 20"><path d="M1 1v15l3.500-3 2.500 6 2.500-1-2.500-6H11z" fill="#fff" stroke="#222" /></svg>
            </div>
            <nav class="doc-tabs">
                <svg class="nudge" viewBox="0 0 6 9"><path d="M5 1v7L1 4.500z" fill="none" stroke="#555" /></svg>
                <a class="doc-tab" href="#"><svg class="slant" viewBox="0 0 20 21"><path d="M0 0l20 20.500" fill="none" stroke="#777" /></svg><span><svg class="ic"><use href="#logo" /></svg>Start Page</span></a>
                <a class="doc-tab active" href="#"><svg class="slant" viewBox="0 0 20 21"><path d="M0 0h20v21z" fill="#fff" /><path d="M0 0l20 20.500" stroke="#777" /></svg><span><svg class="ic"><use href="#logo" /></svg>MIDAS/Civil</span></a>
                <svg class="nudge right" viewBox="0 0 6 9"><path d="M1 1v7l4-3.500z" fill="none" stroke="#555" /></svg>
            </nav>
            <section class="message">
                <div class="panel-title"><span>Message Window</span><svg class="pin"><use href="#pin" /></svg><svg class="x"><use href="#x" /></svg></div>
                <div class="log"><svg viewBox="0 0 460 6"><path d="M77 5.500h2M207 5.500h2M229 5.500h3M277 5.500h2M327 5.500h2M356 5.500h3M366 5.500h2M377 5.500h3M399 5.500h3M420 5.500h2M440 5.500h2" stroke="#444" /></svg></div>
                <label class="command"><span>&gt;</span><input type="text" aria-label="Command"></label>
                <div class="msg-tabs">
                    <button class="step" aria-label="First"><svg viewBox="0 0 10 10"><path d="M1 1v8" stroke="#999" stroke-width="1.500" /><path d="M8 1v8L3 5z" fill="#999" /></svg></button>
                    <button class="step" aria-label="Back"><svg viewBox="0 0 10 10"><path d="M7 1v8L2 5z" fill="#999" /></svg></button>
                    <button class="step" aria-label="Next"><svg viewBox="0 0 10 10"><path d="M3 1v8l5-4z" fill="#999" /></svg></button>
                    <button class="step" aria-label="Last"><svg viewBox="0 0 10 10"><path d="M9 1v8" stroke="#999" stroke-width="1.500" /><path d="M2 1v8l5-4z" fill="#999" /></svg></button>
                    <a class="msg-tab active" href="#"><svg viewBox="0 0 6 17"><path d="M0 0l5 17h1V0z" fill="#fff" /><path d="M0 0l5 17" stroke="#000" fill="none" /></svg><span>Command Message</span><svg viewBox="0 0 6 17"><path d="M0 17l5-17H0z" fill="#fff" /><path d="M0 17L5 0M3 8l3 9" stroke="#000" fill="none" /></svg></a>
                    <a class="msg-tab" href="#"><span>Analysis Message</span><svg viewBox="0 0 6 17"><path d="M0 17L5 0" stroke="#000" fill="none" stroke-width="1.500" /></svg></a>
                    <div class="msg-fill"></div>
                    <div class="msg-scroll"><i></i></div>
                </div>
            </section>
        </section>

        <div class="side">
            <div class="side-bar">
                <i class="hgrip"></i>
                <button aria-label="Zoom fit"><svg class="ic"><use href="#magfit" /></svg></button>
                <button aria-label="Zoom window"><svg class="ic"><use href="#magwin" /></svg></button>
                <button aria-label="Zoom in"><svg class="ic"><use href="#magin" /></svg></button>
                <button aria-label="Zoom out"><svg class="ic"><use href="#magout" /></svg></button>
                <button aria-label="Zoom all"><svg class="ic"><use href="#magall" /></svg></button>
                <i class="hgrip"></i>
                <button aria-label="Dynamic zoom"><svg class="ic"><use href="#magdyn" /></svg></button>
                <button aria-label="Pan"><svg class="ic"><use href="#handmove" /></svg></button>
                <button aria-label="Rotate"><svg class="ic"><use href="#rotate" /></svg></button>
                <i class="hgrip"></i>
                <button aria-label="Redraw"><svg class="ic"><use href="#winrot" /></svg></button>
                <button aria-label="Initial"><svg class="ic"><use href="#winfit" /></svg></button>
                <i class="hsep"></i>
                <button aria-label="Iso"><svg class="ic"><use href="#cube" /></svg></button>
                <button aria-label="Top"><svg class="ic"><use href="#cubetop" /></svg></button>
                <button aria-label="Right"><svg class="ic"><use href="#cuberight" /></svg></button>
                <button aria-label="Front"><svg class="ic"><use href="#cubefront" /></svg></button>
                <button aria-label="Angle"><svg class="ic"><use href="#axes" /></svg></button>
                <i class="hsep"></i>
                <button aria-label="Previous view"><svg class="ic"><use href="#winarrow" /></svg></button>
                <button aria-label="Named view"><svg class="ic"><use href="#winhand" /></svg></button>
            </div>
        </div>
    </main>

    <footer class="status">
        <span class="status-help">For Help, press F1</span>
        <span class="status-node">Node-10</span>
        <span class="status-u">U: 45, 0, 0</span>
        <span class="status-g">G: 45, 0, 0</span>
        <div class="status-tools">
            <span class="pick force"><select aria-label="Force unit"><option>kN</option></select><svg><use href="#chev" /></svg></span>
            <span class="pick length"><select aria-label="Length unit"><option>m</option></select><svg><use href="#chev" /></svg></span>
            <button aria-label="Snap"><svg viewBox="0 0 16 16"><path d="M5 5h6v6H5z" fill="#fff" stroke="#222" stroke-width="1.300" /><path d="M8 0v5M8 11v5M0 8h5M11 8h5" stroke="#222" stroke-width="2" /></svg></button>
            <button class="dim" aria-label="Align"><svg viewBox="0 0 16 16"><path d="M5 2v12M8 4h6M8 8h6M8 12h6M1 8h4M3 6l2 2-2 2" fill="none" stroke="#888" /></svg></button>
            <button class="dim" aria-label="Run"><svg viewBox="0 0 16 16"><path d="M5 2v12l7-6z" fill="#777" /></svg></button>
            <span class="pick none"><select aria-label="Filter"><option>none</option></select><svg><use href="#chev" /></svg></span>
            <button class="query" aria-label="Query">?</button>
            <i class="swatch"></i>
            <input class="num" type="text" value="1" aria-label="Page" disabled>
            <span class="spin off"><i></i><i></i></span>
            <span class="slash">/</span>
            <input class="num" type="text" value="2" aria-label="Pages">
            <span class="spin"><i></i><i></i></span>
        </div>
    </footer>

    <script src="script.js"></script>
</body>

</html>
```
FILE: styles.css
```css
* {
    margin: 0;
    padding: 0;
    box-sizing: border-box;
}

body {
    display: flex;
    flex-direction: column;
    height: 100vh;
    overflow: hidden;
    background-color: #4b4947;
    color: #111;
    font-family: "Open Sans", "Noto Sans", sans-serif;
    font-size: 11px;
}

button,
select,
input {
    border: 0;
    background: none;
    font: inherit;
    color: inherit;
    border-radius: 0;
}

select {
    appearance: none;
}

a {
    color: inherit;
    text-decoration: none;
}

svg {
    display: block;
    flex: none;
}

.sprite {
    position: absolute;
    width: 0;
    height: 0;
}

.ic {
    width: 16px;
    height: 16px;
}

.caret {
    width: 6px;
    height: 4px;
}

/* title bar */
.titlebar {
    position: relative;
    display: flex;
    flex: none;
    height: 27px;
    background-color: #c8c8c8;
    border-bottom: 1px solid #222;
}

.app-button {
    position: absolute;
    left: 0;
    top: 1px;
    z-index: 2;
    width: 45px;
    height: 45px;
    border: 1px solid #222;
    background: linear-gradient(#cfcfcf, #a8a8a8);
}

.app-button svg {
    width: 32px;
    height: 32px;
    margin: 0 auto;
}

.quick {
    display: flex;
    align-items: center;
    width: 167px;
    height: 24px;
    margin: 1px 0 0 44px;
    padding-left: 5px;
    gap: 6px;
    border: 1px solid #222;
    background: linear-gradient(#e0e0e0, #c4c4c4);
}

.quick-more {
    margin-left: 12px;
    padding-top: 2px;
    border-top: 1px solid #666;
}

.titlebar h1 {
    flex: 1;
    padding-right: 24px;
    line-height: 26px;
    font-size: 12px;
    font-weight: 400;
    text-align: center;
    white-space: nowrap;
}

.window-buttons {
    display: flex;
    align-items: center;
    gap: 24px;
    padding-right: 13px;
}

.window-buttons svg {
    width: 12px;
    height: 12px;
}

/* ribbon tabs */
.tabs {
    display: flex;
    flex: none;
    height: 24px;
    padding-left: 48px;
    background-color: #6a696a;
    border-bottom: 2px solid #a02622;
    color: #fff;
}

.tab {
    padding: 0 14px;
    line-height: 26px;
}

.tab.active {
    height: 24px;
    margin: 1px 6px 0 0;
    padding: 0 11px;
    line-height: 24px;
    border: 1px solid #a02622;
    border-bottom: 0;
    background-color: #f2f2f2;
    color: #111;
}

.help {
    display: flex;
    align-items: center;
    gap: 9px;
    margin-left: auto;
    padding-right: 5px;
}

.help svg {
    width: 10px;
    height: 10px;
}

.help .ic {
    width: 15px;
    height: 15px;
}

.help .help-caret {
    width: 6px;
    height: 4px;
}

/* ribbon */
.ribbon {
    display: flex;
    flex: none;
    height: 92px;
    padding-left: 4px;
    gap: 3px;
    background: linear-gradient(#f2f1f1, #e0e0e0 50%, #bdbdbd);
    border-bottom: 1px solid #111;
}

.group {
    display: flex;
    flex-direction: column;
    margin: 1px 0 4px;
    border-right: 1px solid #444;
}

.g-dynamic { width: 308px; }
.g-render { width: 86px; }
.g-select { width: 119px; }
.g-activities { width: 177px; }
.g-grids { width: 89px; }
.g-display { width: 50px; }
.g-window { width: 126px; }
.g-tile { width: 118px; }

.group h2 {
    height: 16px;
    background-color: #3b3a3a;
    color: #d8d8d8;
    font-size: 11px;
    font-weight: 400;
    line-height: 15px;
    text-align: center;
}

.group-body {
    display: flex;
    flex: 1;
    padding: 2px 0 3px 3px;
}

.big {
    display: flex;
    flex-direction: column;
    align-items: center;
    width: 43px;
    padding-top: 3px;
    line-height: 13px;
    white-space: nowrap;
}

.big.wide {
    width: 50px;
}

.big svg {
    width: 32px;
    height: 32px;
    margin-bottom: 3px;
}

.big .caret {
    width: 6px;
    height: 4px;
    margin-top: 4px;
}

.big.pressed {
    outline: 1px solid #777;
    background: linear-gradient(#c4c4c4, #dadada);
}

.col {
    padding-left: 6px;
}

.g-dynamic .col + .col {
    padding-left: 4px;
}

.col.tight {
    padding-left: 3px;
}

.col button {
    display: flex;
    align-items: center;
    height: 22px;
    gap: 3px;
    white-space: nowrap;
}

.col .caret {
    margin-left: 3px;
}

/* toolbar */
.toolbar-row {
    display: flex;
    flex: none;
    height: 26px;
}

.toolbar {
    display: flex;
    align-items: center;
    height: 25px;
    padding: 0 5px 0 3px;
    gap: 6px;
    background-color: #cfcfcf;
    border-radius: 0 0 3px 0;
}

.grip {
    width: 3px;
    height: 16px;
    background: repeating-linear-gradient(#333 0 2px, transparent 2px 5px);
}

.wide-grip {
    margin: 0 2px;
}

.sep {
    width: 1px;
    height: 14px;
    margin: 0 1px;
    background-color: #333;
}

.toolbar .on {
    margin: 0 -3px;
    padding: 2px;
    border: 1px solid #444;
    background-color: #999;
}

.toolbar .on.light {
    background-color: #d8d8d8;
}

.combo {
    display: flex;
    width: 117px;
    height: 20px;
    margin-right: -3px;
    padding: 1px;
    background-color: #fff;
}

.combo select {
    flex: 1;
    min-width: 0;
}

.combo span,
.stage-arrow {
    display: flex;
    align-items: center;
    justify-content: center;
    width: 14px;
    background-color: #b4b5b8;
}

/* main area */
main {
    display: flex;
    flex: 1;
    min-height: 0;
}

.tree-panel {
    display: flex;
    flex-direction: column;
    flex: none;
    width: 293px;
    margin-right: 6px;
    border-top: 1px solid #ddd;
    border-right: 1px solid #ddd;
    background-color: #555354;
}

.panel-title {
    display: flex;
    align-items: center;
    flex: none;
    height: 19px;
    padding: 0 5px 0 4px;
    gap: 12px;
    background-color: #555254;
    color: #d8d8d8;
    line-height: 16px;
}

.panel-title span {
    flex: 1;
}

.pin {
    width: 10px;
    height: 12px;
}

.x {
    width: 9px;
    height: 9px;
}

.tree-tabs {
    display: flex;
    height: 21px;
    align-items: flex-end;
    color: #fff;
}

.tree-tabs a {
    height: 19px;
    padding: 0 7px;
    line-height: 18px;
}

.tree-tabs .active {
    padding: 0 5px;
    border: 1px solid #222;
    border-bottom: 0;
    background-color: #f4f4f4;
    color: #111;
}

.tree-box {
    display: flex;
    flex-direction: column;
    flex: 1;
    min-height: 0;
    margin-right: 2px;
    padding-left: 3px;
    border: 1px solid #999;
    border-left: 2px solid #ddd;
    background-color: #f2f1ef;
}

.tree-scroll {
    display: flex;
    flex: 1;
    min-height: 0;
}

.tree {
    flex: 1;
    min-width: 0;
    overflow: hidden;
    list-style: none;
    background-color: #fff9f1;
    font-family: Roboto, "Liberation Sans", Arial, sans-serif;
}

.tree li {
    display: flex;
    align-items: center;
    height: 16px;
    line-height: 16px;
    white-space: nowrap;
}

.tree .ic {
    margin-right: 6px;
}

.tree .root .ic {
    margin-right: 3px;
}

.tree .root span {
    padding: 0 2px;
    background-color: #e6e4e1;
}

/* dotted guide lines beside the rows */
.guide {
    flex: none;
    width: 20px;
    height: 16px;
    background: repeating-linear-gradient(#a89f98 0 1px, transparent 1px 2px) 6px 0 / 1px 16px no-repeat;
}

.guide.twig {
    display: flex;
    align-items: center;
    width: 18px;
    padding-left: 2px;
    background:
        repeating-linear-gradient(#a89f98 0 1px, transparent 1px 2px) 6px 0 / 1px 16px no-repeat,
        repeating-linear-gradient(90deg, #a89f98 0 1px, transparent 1px 2px) 7px 8px / 11px 1px no-repeat;
}

.toggle {
    width: 9px;
    height: 9px;
    border: 1px solid #8a8f98;
    background: linear-gradient(#335 0 0) center / 5px 1px no-repeat #fff;
}

.toggle.closed {
    background:
        linear-gradient(#335 0 0) center / 5px 1px no-repeat,
        linear-gradient(#335 0 0) center / 1px 5px no-repeat #fff;
}

.vbar {
    width: 13px;
    padding: 17px 0 0 5px;
}

.vbar i {
    display: block;
    width: 2px;
    height: 150px;
    background-color: #8c8c8c;
}

.hbar {
    height: 18px;
    padding: 8px 0 0 15px;
}

.hbar i {
    display: block;
    width: 197px;
    height: 2px;
    background-color: #8c8c8c;
}

.center {
    display: flex;
    flex-direction: column;
    flex: 1;
    min-width: 0;
}

.view {
    position: relative;
    flex: 1;
    min-height: 0;
    padding: 1px;
    border: 2px solid #fff;
    outline: 1px solid #777;
    outline-offset: -4px;
    background-color: #fff;
}

.model {
    width: 100%;
    height: 100%;
}

.stage-bar {
    position: absolute;
    left: 17px;
    top: 15px;
    display: flex;
    align-items: center;
    height: 16px;
}

.stage-bar select {
    width: 127px;
    margin-left: 8px;
}

.stage-arrow {
    height: 16px;
    margin-right: 5px;
}

.stage-bar .sep {
    margin-right: 7px;
}

.view-cube {
    position: absolute;
    right: 13px;
    top: 13px;
    width: 72px;
    height: 72px;
}

.view-cube text {
    fill: #bbb;
    font-size: 9px;
    text-anchor: middle;
}

.pointer {
    position: absolute;
    left: 596px;
    top: 443px;
    width: 12px;
    height: 20px;
}

.doc-tabs {
    display: flex;
    flex: none;
    height: 24px;
    border-top: 1px solid #999;
    background-color: #d0d0d0;
}

.nudge {
    width: 6px;
    height: 9px;
    margin: 7px 7px 0 6px;
}

.nudge.right {
    margin: 7px 12px 0 auto;
}

.doc-tab {
    display: flex;
    height: 21px;
}

.slant {
    width: 20px;
    height: 21px;
}

.doc-tab span {
    display: flex;
    align-items: center;
    padding: 0 10px 0 8px;
    gap: 7px;
    border-bottom: 1px solid #777;
}

.doc-tab.active {
    margin-left: -19px;
    font-weight: 700;
}

.doc-tab.active span {
    padding-right: 5px;
    border-right: 1px solid #777;
    background-color: #fff;
}

.message {
    flex: none;
    height: 73px;
    margin-top: 6px;
    border-top: 1px solid #ddd;
    background-color: #f0f0f0;
}

.message .panel-title {
    height: 21px;
    padding-right: 7px;
    border-bottom: 1px solid #aaa;
}

.log {
    height: 9px;
    margin: 1px 2px 0;
    border-top: 2px solid #777;
    border-left: 1px solid #777;
    background-color: #fffbf4;
}

.log svg {
    width: 460px;
    height: 6px;
}

.command {
    display: flex;
    align-items: center;
    height: 21px;
    margin: 0 2px;
    padding-left: 2px;
    border-top: 2px solid #777;
    border-left: 1px solid #777;
    border-bottom: 1px solid #ccc;
    background-color: #fffbf4;
    font-size: 14px;
}

.command input {
    flex: 1;
}

.msg-tabs {
    display: flex;
    height: 18px;
    margin-top: 1px;
    font-family: "Liberation Sans", Arial, sans-serif;
    font-size: 12px;
}

.step {
    display: flex;
    align-items: center;
    justify-content: center;
    width: 18px;
    border: 1px solid #999;
    border-top-color: #fff;
    border-left-color: #fff;
}

.step svg {
    width: 10px;
    height: 10px;
}

.msg-tab {
    display: flex;
    height: 17px;
    line-height: 17px;
}

.msg-tab svg {
    width: 6px;
    height: 17px;
}

.msg-tab span {
    padding: 0 10px;
    border-top: 1px solid #000;
    border-bottom: 1px solid #999;
}

.msg-tab.active span {
    padding: 0 5px;
    border-top-color: #fff;
    background-color: #fff;
    font-weight: 700;
}

.msg-fill {
    flex: 1;
    margin-right: 3px;
    border-top: 1px solid #000;
    border-right: 1px solid #000;
}

.msg-scroll {
    flex: none;
    width: 529px;
    padding: 8px 0 0 17px;
    border-left: 2px solid #000;
}

.msg-scroll i {
    display: block;
    width: 18px;
    height: 2px;
    background-color: #8c8c8c;
}

/* right tool strip */
.side {
    flex: none;
    width: 27px;
    padding-right: 1px;
}

.side-bar {
    display: flex;
    flex-direction: column;
    align-items: center;
    padding: 4px 0 5px;
    gap: 6px;
    border-radius: 3px;
    background-color: #cfcfcf;
}

.hgrip {
    width: 14px;
    height: 3px;
    background: repeating-linear-gradient(90deg, #333 0 2px, transparent 2px 4px);
}

button + .hgrip {
    margin: 2px 0;
}

.hsep {
    width: 14px;
    height: 1px;
    background-color: #333;
}

/* status bar */
.status {
    display: flex;
    flex: none;
    height: 19px;
    background-color: #272727;
    color: #f0f0f0;
    line-height: 20px;
}

.status-help {
    flex: 1;
    padding-left: 6px;
}

.status-node,
.status-u,
.status-g {
    border-left: 1px solid #555;
    padding-left: 3px;
}

.status-node {
    width: 85px;
    padding-left: 9px;
}

.status-u {
    width: 171px;
}

.status-g {
    width: 172px;
}

.status-tools {
    display: flex;
    align-items: center;
    flex: none;
    width: 371px;
    background-color: #f4f4f4;
    color: #111;
}

.pick {
    display: flex;
    align-items: center;
    height: 19px;
    background-color: #fff;
}

.pick select {
    flex: 1;
    min-width: 0;
    padding-left: 3px;
    overflow: hidden;
}

.pick svg {
    width: 10px;
    height: 6px;
    margin-right: 4px;
}

.pick.force {
    width: 49px;
    margin-right: 3px;
}

.pick.length {
    width: 50px;
    margin-right: 8px;
    border-right: 1px solid #aaa;
}

.pick.none {
    width: 43px;
    margin-right: 7px;
    border: 1px solid #ccc;
}

.pick.none select {
    padding-left: 1px;
}

.pick.none svg {
    margin-right: 2px;
}

.status-tools button {
    display: flex;
    align-items: center;
    justify-content: center;
    width: 16px;
    height: 17px;
    margin-right: 7px;
    border: 1px solid #3cc8d8;
    background-color: #fff;
}

.status-tools button.dim {
    border-color: #a4dfe6;
    background-color: #eee;
}

.status-tools button svg {
    width: 14px;
    height: 14px;
}

.swatch {
    width: 16px;
    height: 16px;
    background-color: #00e5ff;
}

.num {
    width: 21px;
    text-align: center;
}

.num:disabled {
    color: #999;
}

.slash {
    width: 22px;
    padding-left: 5px;
}

.spin {
    display: flex;
    flex-direction: column;
    justify-content: center;
    align-items: center;
    gap: 4px;
    width: 14px;
    height: 18px;
    border: 1px solid #bbb;
}

.spin i {
    border: 3px solid transparent;
    border-top: 0;
    border-bottom: 4px solid #333;
}

.spin i + i {
    border-bottom: 0;
    border-top: 4px solid #333;
}

.spin.off {
    opacity: .5;
}

.slash + .num {
    margin: 0 3px;
    width: 16px;
}
```
FILE: script.js
```js
// works tree: [level, icon, text, state]
const rows = [
    [0, 'root', 'Works'],
    [1, 'edit', 'Analysis Control Data', 'open'],
    [2, 'edit', 'Eigenvalue Analysis [ Type=Eigenvectors-La'],
    [2, 'edit', 'Construction Stage Analysis [ Stage=Last ]'],
    [2, 'edit', 'Boundary Change Assignment to Load Cases', 'closed'],
    [1, 'root', 'Structures', 'open'],
    [2, 'nodes', 'Nodes : 2941'],
    [2, 'elems', 'Elements : 2798', 'closed'],
    [1, 'mat', 'Properties', 'open'],
    [2, 'mat', 'Material : 3', 'closed'],
    [2, 'time', 'Time Dependent Material(C&S)', 'closed'],
    [2, 'comp', 'Time Dependent Material(Comp. Strength)', 'closed'],
    [2, 'link', 'Time Dependent Material Link', 'closed'],
    [2, 'chg', 'Change Element Dependent Material propert'],
    [2, 'sec', 'Section : 13', 'closed'],
    [2, 'rein', 'Reinforcement : 1', 'closed'],
    [2, 'thick', 'Thickness : 2', 'closed'],
    [1, 'bound', 'Boundaries', 'open'],
    [2, 'supp', 'Supports : 2', 'closed'],
    [2, 'spring', 'Point Spring Supports : 1304', 'closed'],
    [2, 'elastic', 'Elastic Link : 4'],
    [2, 'rigid', 'Rigid Link : 40', 'closed'],
    [2, 'force', 'Forces-Deformation Function : 320', 'closed'],
    [1, 'loads', 'Static Loads', 'open']
];

const cases = [
    'Peso Propio ; ]', 'Peso Dovela ; ]', 'Resaltes ; ]', 'Carga Sobreimpuest...', 'LL Const ; ]',
    'Peso Carros ; ]', 'Carga Equipos ; ]', 'Cables de Construccio..', 'Cables de Cosido ; ]',
    'Espectro ESX ; ]', 'Espectro ESY ; ]', 'MaxCarga Movil_I_Fy..', 'MaxCarga Movil_J_Fy.',
    'MaxCarga Movil_I_My.', 'MaxCarga Movil_J_My', 'MaxCarga Movil_I_Fy1', 'MaxCarga Movil_J_Fy1',
    'MaxCarga Movil_I_My1', 'MaxCarga Movil_J_My', 'MaxCarga Movil_I_Fy1', 'MaxCarga Movil_J_Fy1',
    'MaxCarga Movil_I_My1', 'MaxCarga Movil_J_My', 'MaxCarga Movil_I_Fy1', 'MaxCarga Movil_J_Fy1'
];
cases.forEach((name, i) => rows.push([2, 'case', `Static Load Case ${i + 1} [${name}`, 'closed']));

document.getElementById('tree').innerHTML = rows.map(([level, icon, text, state]) => {
    const guide = level === 2 ? '<i class="guide"></i>' : '';
    const toggle = state ? `<button class="toggle ${state}" aria-label="Toggle"></button>` : '';
    const twig = level ? `<i class="guide twig">${toggle}</i>` : '';
    return `<li class="${level ? '' : 'root'}">${guide}${twig}<svg class="ic"><use href="#t-${icon}" /></svg><span>${text.replace('&', '&amp;')}</span></li>`;
}).join('');

// bridge model
const out = [];
const poly = (pts, fill, stroke = '#3a3a3a') => out.push(`<polygon points="${pts}" fill="${fill}" stroke="${stroke}" />`);
const path = (d, stroke = '#3a3a3a', width = 1) => out.push(`<path d="${d}" fill="none" stroke="${stroke}" stroke-width="${width}" />`);

const backY = x => 469 - 0.149 * (x - 412);
const frontY = x => 506 - 0.1504 * (x - 491);

function pile(x, top, bottom) {
    out.push(`<path d="M${x} ${top}V${bottom - 1}q9 3 18 0V${top}z" fill="url(#pile)" stroke="#045560" />`);
    let d = '';
    for (let y = bottom; y > top; y -= 6) d += `M${x - 1} ${y - 2}q10 4 20 0`;
    path(d, '#03252b', 1.2);
}

function pier() {
    pile(793, 630, 789);
    pile(740, 622, 797);
    pile(824, 625, 803);
    pile(771, 635, 812);
    // pile cap
    poly('728,604 802,594 854,613 777,625', '#020f12', '#000');
    poly('728,604 777,625 777,648 728,628', '#05707c', '#001c20');
    poly('777,625 854,613 854,638 777,648', '#03606b', '#001c20');
    let d = '';
    for (let x = 730; x < 777; x += 3) d += `M${x} ${604 + (x - 728) * 0.43}v23.500`;
    for (let x = 780; x < 854; x += 4) d += `M${x} ${625 - (x - 777) * 0.156}v23.500`;
    path(d, '#001c20');
    path('M748 606l14 5M770 617l10 3M800 616l20 -3M806 619l18-4M820 608l8 2', '#0a4c54');
    // column
    poly('761,481 784,489 784,615 761,607', '#008794', '#00252a');
    poly('784,489 821,484 821,611 787,615 784,615', '#006c79', '#00252a');
    path('M787.5 489V615M816.5 485V612', '#00252a');
    poly('761,481 784,489 821,484 840,470 800,474', '#00545e', '#00252a');
}

out.push('<defs><linearGradient id="pile"><stop offset="0" stop-color="#006a76" /><stop offset=".4" stop-color="#0a8f9c" /><stop offset="1" stop-color="#006a76" /></linearGradient></defs>');

// end piles
pile(423, 530, 652);
pile(462, 545, 669);
pile(1717, 335, 458);
pile(1756, 350, 477);

// right abutment
poly('1715,275 1796,309 1796,342 1793,342 1767,331 1767,300', '#f4f4f4', '#333');
let mesh = '';
for (let i = 0; i < 32; i++) mesh += `M${1716 + i * 2.5} ${275 + i * 1.07}v${i < 20 ? 6 : 31}`;
for (let i = 0; i < 8; i++) mesh += i < 3 ? `M1715 ${276 + i * 2.5}l81 34` : `M1767 ${290 + i * 5}l29 12`;
path(mesh, '#333');
poly('1796,309 1793,310 1793,341 1796,341', '#ccc');
poly('1713,339 1728,333 1752,332 1773,345 1773,366', '#fafafa');
poly('1746,332 1767,331 1795,342 1773,345', '#f0f0f0');
poly('1773,345 1795,342 1795,363 1773,366', '#c9c9c9');
path('M1719 336v6M1725 334v10M1732 334v13M1739 334v16M1746 333v21M1753 334v23M1760 338v22M1767 342v21M1753 336l20-3M1760 339l21-3M1767 342l21-3');

// side face of the deck
const under = [[481, 521], [516, 517], [568, 509], [622, 501], [674, 493], [727, 486], [780, 479], [844, 469],
    [898, 461], [951, 452], [1003, 443], [1056, 436], [1109, 428], [1131, 424], [1184, 417], [1236, 409],
    [1290, 401], [1342, 393], [1395, 387], [1459, 377], [1512, 369], [1566, 360], [1618, 352], [1672, 343],
    [1725, 335], [1767, 329]];
const underY = x => {
    const i = under.findIndex(p => p[0] >= x);
    if (i < 1) return under[0][1];
    const [a, b] = [under[i - 1], under[i]];
    return a[1] + (b[1] - a[1]) * (x - a[0]) / (b[0] - a[0]);
};

pier();
const first = out.splice(out.findIndex(s => s.includes('M793 630'))).join('');
out.push(`<g id="pier">${first}</g><use href="#pier" x="615" y="-92" />`);

poly(`481,${frontY(481) + 3} ${under.join(' ')} 1767,${frontY(1767) + 3}`, '#c2c2c2');
let fascia = '';
[516, 568, 622, 674, 727, 780, 808, 812, 816, 844, 898, 951, 1003, 1056, 1109, 1120, 1131, 1184, 1236, 1290, 1342,
    1395, 1425, 1428, 1431, 1459, 1512, 1566, 1618, 1672, 1725].forEach(x => {
    fascia += `M${x}.5 ${frontY(x) + 3}V${underY(x)}`;
});
path(fascia);

// deck top
poly('491,506 1783,312 1783,315 491,509', '#d0d0d0');
poly('412,469 1707,276 1783,312 491,506', '#e5e5e5');
let joints = 'M451 487L1745 293';
[457, 510, 563, 616, 669, 722, 750, 754, 758, 785, 839, 892, 945, 998, 1051, 1061, 1071, 1124, 1177, 1230, 1284, 1336,
    1366, 1370, 1374, 1400, 1453, 1507, 1560, 1612, 1665].forEach(x => {
    joints += `M${x} ${backY(x)}L${x + 76} ${frontY(x + 76)}v3`;
});
path(joints);

// left abutment
poly('481,527 502,535 480,538', '#eee');
poly('402,505 480,538 480,559 402,525', '#fafafa');
poly('480,538 502,535 502,556 480,559', '#cbcbcb');
let d = '';
for (let x = 408; x < 480; x += 6.5) d += `M${x} ${505 + (x - 402) * 0.42}v21`;
path(d);
poly('401,471 480,505 480,538 401,504', '#f4f4f4', '#333');
poly('480,505 482,505 482,537 480,538', '#ccc');
d = '';
for (let x = 401; x < 481; x += 2.6) d += `M${x} ${471 + (x - 401) * 0.43}v33`;
for (let y = 0; y < 33; y += 3.6) d += `M401 ${471 + y}l79 34`;
path(d, '#333', 1.2);
// load arrows on the first span
path('M420 478l10-4 12 1 8 3-10 5-18-3M430 484l12-7 14 8-12 5zM444 490l6-7 8 5-4 3M452 485l46-5M456 489l40-5M464 484l34-4M486 478l8 6M490 483l10-3M424 480l30 8', '#1d62b8');

document.getElementById('model').innerHTML = out.join('');
```
